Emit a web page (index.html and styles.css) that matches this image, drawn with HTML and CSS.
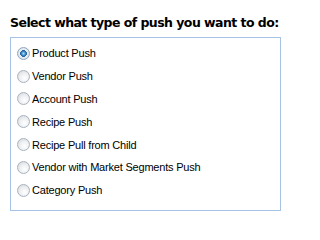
FILE: index.html
```html
<!DOCTYPE html>
<html>
<head>
<meta charset="utf-8">
<link rel="stylesheet" href="styles.css">
</head>
<body>
<h1 class="title">Select what type of push you want to do:</h1>
<div class="box">
  <label class="opt"><input type="radio" name="push" class="radio" checked><span>Product Push</span></label>
  <label class="opt"><input type="radio" name="push" class="radio"><span>Vendor Push</span></label>
  <label class="opt"><input type="radio" name="push" class="radio"><span>Account Push</span></label>
  <label class="opt"><input type="radio" name="push" class="radio"><span>Recipe Push</span></label>
  <label class="opt"><input type="radio" name="push" class="radio"><span>Recipe Pull from Child</span></label>
  <label class="opt"><input type="radio" name="push" class="radio"><span>Vendor with Market Segments Push</span></label>
  <label class="opt"><input type="radio" name="push" class="radio"><span>Category Push</span></label>
</div>
</body>
</html>
```
FILE: styles.css
```css
html, body {
  margin: 0;
  padding: 0;
  background: #ffffff;
}
body {
  padding: 14px 0 0 10px;
  width: 271px;
}
.title {
  margin: 0 0 6px 0;
  font-family: "DejaVu Sans", Verdana, sans-serif;
  font-weight: bold;
  font-size: 12.5px;
  letter-spacing: -0.55px;
  line-height: 17px;
  color: #000000;
  white-space: nowrap;
}
.box {
  border: 1px solid #a7c3e3;
  height: 168px;
  padding: 4px 0 0 5px;
  display: flex;
  flex-direction: column;
}
.opt {
  display: flex;
  align-items: center;
  height: 22.8px;
  gap: 2px;
  font-family: "Liberation Sans", Tahoma, sans-serif;
  font-size: 11px;
  letter-spacing: -0.2px;
  color: #000000;
}
.radio {
  appearance: none;
  -webkit-appearance: none;
  margin: 0 0 0 1px;
  width: 13px;
  height: 13px;
  border-radius: 50%;
  border: 1px solid #a9b2bd;
  background: radial-gradient(circle at 60% 65%, #ffffff 0%, #eef0f2 45%, #d2d6dc 100%);
  box-sizing: border-box;
  position: relative;
}
.radio:checked {
  border-color: #8ea6bf;
  background: radial-gradient(circle, #aee0f8 0%, #3a8ccc 25%, #1e5f99 40%, #e8eef4 46%, #d4dbe3 100%);
}
```
